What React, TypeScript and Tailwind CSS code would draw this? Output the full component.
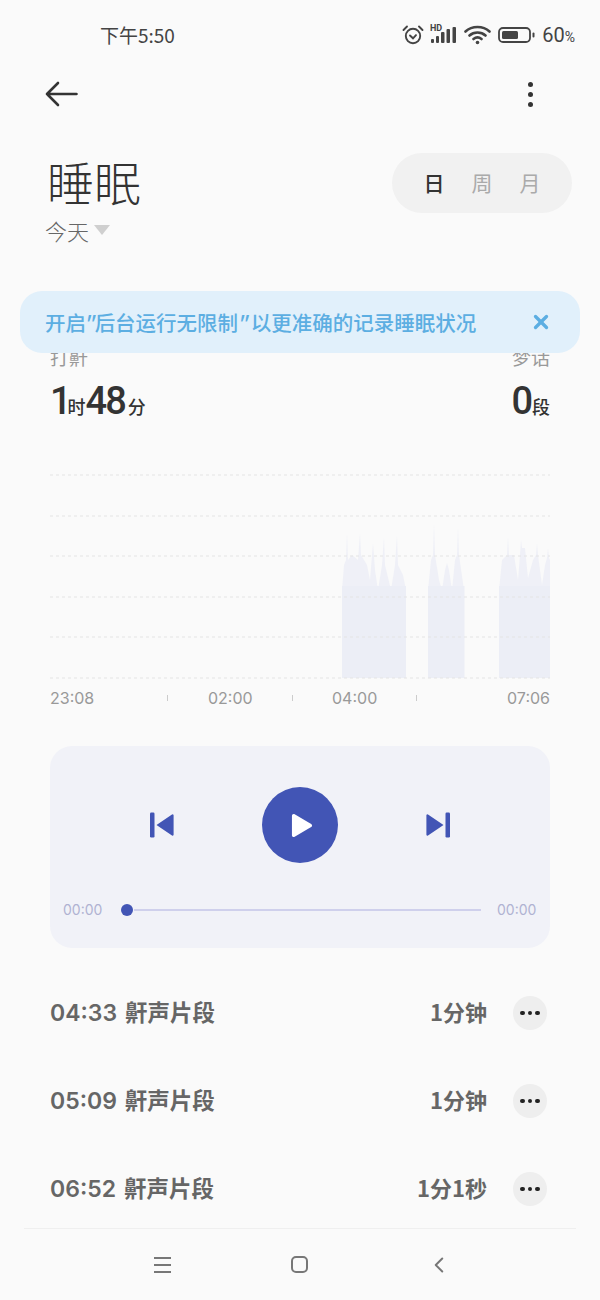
import { ChevronLeft, X } from "lucide-react";

const cjk = "font-['Noto_Sans_CJK_SC','Noto_Sans',sans-serif]";
const num = "font-['Roboto','Noto_Sans_CJK_SC',sans-serif]";
const digits = "font-['Inter','Noto_Sans_CJK_SC',sans-serif]";

const gridLines = [475, 516, 556, 597, 637, 678];

const snoreBodies = [
  { x: 342, width: 64 },
  { x: 428, width: 36.5 },
  { x: 499, width: 51 },
];

const snoreSpikes = [
  "342,590 344,565 346,560 347,533 348,560 352,555 358,560 360,533 361,555 367,565 370,580 373,543 375,570 378,590 382,565 384,537 385,565 391,590 395,565 397,535 398,565 403,575 406,590",
  "428,590 431,560 433,555 434,523 435,555 439,580 442,590 445,570 447,563 449,570 452,590 455,560 457,555 458,527 459,555 464,590",
  "499,590 502,560 507,555 508,537 509,555 514,555 518,580 520,555 521,540 522,548 525,548 528,578 533,560 536,555 537,543 538,555 542,585 545,565 547,558 548,548 549,558 550,560 550,590",
];

const clips = [
  { time: "04:33", length: "1分钟" },
  { time: "05:09", length: "1分钟" },
  { time: "06:52", length: "1分1秒" },
];

function StatusIcons() {
  return (
    <div className="flex items-center text-[#444]">
      <svg width="22" height="22" viewBox="0 0 22 22" fill="none" stroke="currentColor" strokeWidth="1.9">
        <circle cx="11" cy="12" r="7.2" />
        <path d="M8 11.5l3 2.8 3-3.2M1.5 6l3.5-3.5M20.5 6L17 2.5" strokeLinecap="round" />
      </svg>
      <svg className="ml-[6px]" width="28" height="22" viewBox="0 0 28 22" fill="currentColor">
        <text x="0" y="7" fontSize="9" fontWeight="700" fontFamily="Roboto, sans-serif">HD</text>
        <rect x="1" y="15" width="3" height="4" rx="1" />
        <rect x="6" y="12" width="3" height="7" rx="1" />
        <rect x="11" y="8" width="3.5" height="11" rx="1" />
        <rect x="16.5" y="5" width="3.5" height="14" rx="1" />
        <rect x="22.5" y="3" width="3.5" height="16" rx="1" />
      </svg>
      <svg className="ml-[6px]" width="27" height="22" viewBox="0 0 27 22" fill="none" stroke="currentColor" strokeWidth="2.6" strokeLinecap="round">
        <path d="M1.5 7.5C8 1.5 19 1.5 25.5 7.5M5.5 11.5C10 7.500 17 7.5 21.5 11.5M9.5 15C12 13 15 13 17.5 15" />
        <circle cx="13.5" cy="18.5" r="1.8" fill="currentColor" stroke="none" />
      </svg>
      <svg className="ml-[7px]" width="37" height="18" viewBox="0 0 37 18" fill="none">
        <rect x="1" y="2" width="31" height="14" rx="4" stroke="currentColor" strokeWidth="1.8" />
        <rect x="4" y="5" width="16" height="8" rx="1.5" fill="currentColor" />
        <rect x="34.5" y="6.5" width="2" height="5" rx="1" fill="currentColor" />
      </svg>
      <span className={`${num} ml-[7px] text-[20px] leading-none`}>
        60<span className="text-[14px]">%</span>
      </span>
    </div>
  );
}

function SkipIcon({ flip }: { flip?: boolean }) {
  return (
    <svg width="24" height="26" viewBox="0 0 24 26" fill="#4255b5" className={flip ? "-scale-x-100" : ""}>
      <rect x="0" y="0.5" width="4.5" height="25" rx="1.2" />
      <path d="M6.5 13L22 2.5a1 1 0 0 1 1.6.8V22.7a1 1 0 0 1-1.6.8Z" />
    </svg>
  );
}

export default function App() {
  return (
    <div className={`${cjk} relative h-[1300px] w-[600px] overflow-hidden bg-[#fafafa] text-[#333]`}>
      {/* status bar */}
      <div className="flex h-[70px] items-center justify-between pl-[100px] pr-[25px]">
        <span className="-mt-[2px] text-[19px] leading-none text-[#444]">下午5:50</span>
        <StatusIcons />
      </div>

      {/* top actions */}
      <div className="flex h-[48px] items-center justify-between pl-[45px] pr-[67px]">
        <svg width="33" height="26" viewBox="0 0 33 26" fill="none" stroke="#333" strokeWidth="2.6" strokeLinecap="round" strokeLinejoin="round">
          <path d="M31.5 13H2M13 2L2 13l11 11" />
        </svg>
        <div className="flex flex-col gap-[5px]">
          <span className="size-[5px] rounded-full bg-[#333]" />
          <span className="size-[5px] rounded-full bg-[#333]" />
          <span className="size-[5px] rounded-full bg-[#333]" />
        </div>
      </div>

      {/* title and range switch */}
      <div className="relative pl-[47px]">
        <h1 className="pt-[35px] text-[47px] font-light leading-[56px] text-[#333]">睡眠</h1>
        <div className="-ml-[2px] mt-[1px] flex h-[40px] items-center text-[#666]">
          <span className="text-[22px] font-light leading-none">今天</span>
          <span className="ml-[5px] h-0 w-0 border-x-[8px] border-t-[10px] border-x-transparent border-t-[#cfcfcf]" />
        </div>
        <div className="absolute right-[28px] top-[35px] flex h-[60px] w-[180px] items-center justify-center gap-[27px] rounded-full bg-[#f1f1f1] text-[21px] text-[#aaa]">
          <span className="font-medium text-[#333]">日</span>
          <span>周</span>
          <span>月</span>
        </div>
      </div>

      {/* notice over the stats */}
      <div className="absolute left-[20px] top-[291px] z-10 flex h-[62px] w-[560px] items-center justify-between rounded-[22px] bg-[#e1f0fb] pl-[25px] pr-[28px]">
        <span className="text-[20.5px] font-medium leading-none text-[#5caee2]">
          开启<span className="-ml-[3px] mr-[1px] italic">"</span>后台运行无限制<span className="-ml-[2px] mr-[4px] italic">"</span>以更准确的记录睡眠状况
        </span>
        <X size={22} strokeWidth={3.6} className="text-[#5caee2]" />
      </div>

      {/* stats */}
      <div className="mt-[95px] flex justify-between px-[50px]">
        <div>
          <div className="h-[24px] text-[19px] leading-[24px] text-[#999]">打鼾</div>
          <div className="mt-[13px] flex h-[38px] items-baseline text-[#333]">
            <span className={`${num} text-[38px] font-medium leading-[38px] tracking-[-2px]`}>1</span>
            <span className="-ml-[2px] text-[18px] font-medium">时</span>
            <span className={`${num} text-[38px] font-medium leading-[38px] tracking-[-2px]`}>48</span>
            <span className="ml-[3px] text-[18px] font-medium">分</span>
          </div>
        </div>
        <div className="flex flex-col items-end">
          <div className="h-[24px] text-[19px] leading-[24px] text-[#999]">梦话</div>
          <div className="mt-[13px] flex h-[38px] items-baseline text-[#333]">
            <span className={`${num} text-[38px] font-medium leading-[38px] tracking-[-2px]`}>0</span>
            <span className="ml-[1px] text-[18px] font-medium">段</span>
          </div>
        </div>
      </div>

      {/* snore chart */}
      <div className="mt-[50px] px-[50px]">
        <svg width="500" height="212" viewBox="50 470 500 212" className="block">
          {snoreSpikes.map((points) => (
            <polygon key={points} points={points} fill="#eff0f7" />
          ))}
          {snoreBodies.map((bar) => (
            <rect key={bar.x} x={bar.x} y="586" width={bar.width} height="92" fill="#eceef6" />
          ))}
          {gridLines.map((y) => (
            <line key={y} x1="50" x2="550" y1={y} y2={y} stroke="#e4e4e4" strokeWidth="1" strokeDasharray="3 3" />
          ))}
        </svg>
        <div className={`${digits} mt-[4px] flex h-[24px] items-center text-[16px] leading-none text-[#999]`}>
          <span className="w-[45px]">23:08</span>
          <span className="ml-[72px] h-[6px] w-px bg-[#ccc]" />
          <span className="ml-[40px] w-[45px]">02:00</span>
          <span className="ml-[39px] h-[6px] w-px bg-[#ccc]" />
          <span className="ml-[39px] w-[45px]">04:00</span>
          <span className="ml-[39px] h-[6px] w-px bg-[#ccc]" />
          <span className="ml-auto">07:06</span>
        </div>
      </div>

      {/* player */}
      <div className="mx-[50px] mt-[36px] flex h-[202px] flex-col rounded-[22px] bg-[#f1f2f8] px-[13px]">
        <div className="mt-[41px] flex items-center justify-center gap-[88px]">
          <SkipIcon />
          <div className="flex size-[76px] items-center justify-center rounded-full bg-[#4255b5]">
            <svg width="22" height="25" viewBox="0 0 24 26" fill="#fff" className="ml-[3px]">
              <path d="M1 2.5C1 .8 2.6 0 4 .8L22 11.3c1.3.8 1.3 2.6 0 3.4L4 25.2c-1.4.8-3 0-3-1.7Z" />
            </svg>
          </div>
          <SkipIcon flip />
        </div>
        <div className={`${digits} mt-[40px] flex items-center text-[14px] leading-none text-[#b0b2d2]`}>
          <span className="w-[40px]">00:00</span>
          <span className="ml-[18px] size-[12px] rounded-full bg-[#4255b5]" />
          <span className="ml-[1px] h-[2px] flex-1 bg-[#cfd0ec]" />
          <span className="ml-[16px] w-[40px]">00:00</span>
        </div>
      </div>

      {/* clip list */}
      <div className="mt-[35px] flex flex-col gap-[28px] pl-[50px] pr-[53px]">
        {clips.map((clip) => (
          <div key={clip.time} className="flex h-[60px] items-center text-[22px] font-semibold leading-none text-[#666]">
            <span className={`${digits} text-[23px] font-semibold`}>{clip.time}</span>
            <span className="-mt-[4px] ml-[8px] text-[22.5px]">鼾声片段</span>
            <span className="-mt-[4px] ml-auto">{clip.length}</span>
            <div className="ml-[26px] flex size-[34px] items-center justify-center gap-[3px] rounded-full bg-[#eeeeee]">
              <span className="size-[4.5px] rounded-full bg-[#222]" />
              <span className="size-[4.5px] rounded-full bg-[#222]" />
              <span className="size-[4.5px] rounded-full bg-[#222]" />
            </div>
          </div>
        ))}
      </div>

      {/* system nav */}
      <div className="mx-[24px] mt-[9px] flex h-[72px] items-center border-t border-[#efefef] pl-[130px] text-[#777]">
        <div className="flex w-[17px] flex-col gap-[5px]">
          <span className="h-[2px] bg-[#777]" />
          <span className="h-[2px] bg-[#777]" />
          <span className="h-[2px] bg-[#777]" />
        </div>
        <span className="ml-[120px] size-[17px] rounded-[5px] border-2 border-[#777]" />
        <ChevronLeft size={26} strokeWidth={1.8} className="ml-[118px]" />
      </div>
    </div>
  );
}
